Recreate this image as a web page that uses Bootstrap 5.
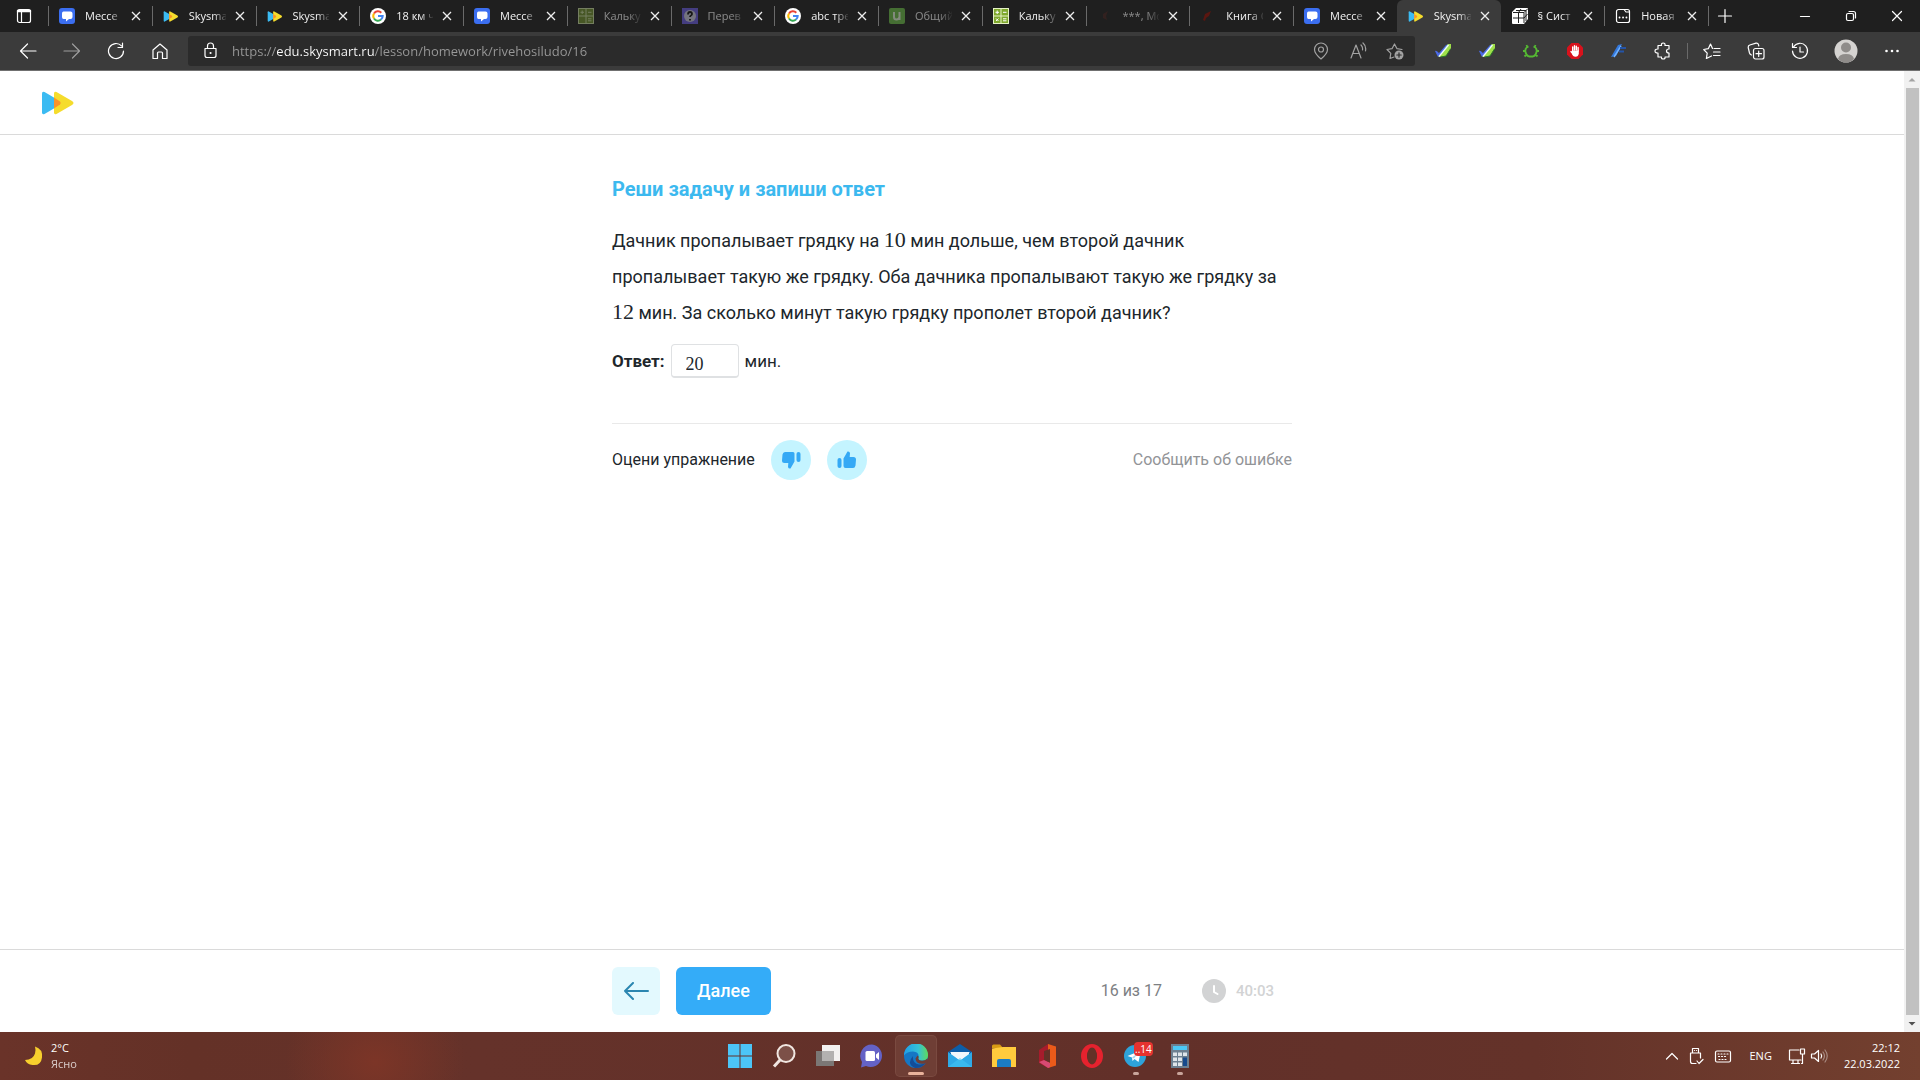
<!DOCTYPE html>
<html lang="ru">
<head>
<meta charset="utf-8">
<meta name="viewport" content="width=device-width, initial-scale=1">
<title>Skysmart</title>
<link href="https://cdn.jsdelivr.net/npm/bootstrap@5.3.0/dist/css/bootstrap.min.css" rel="stylesheet">
<style>
  body { font-family: "Open Sans", "Noto Sans", sans-serif; font-size: 11px; line-height: 16px; color: #fff; background: #fff; }
  svg { display: block; flex: none; }
  .ln { fill: none; stroke: currentColor; stroke-width: 1.2; stroke-linecap: round; stroke-linejoin: round; }
  .bare { border: 0; background: none; color: inherit; padding: 0; display: flex; align-items: center; justify-content: center; flex: none; }

  /* browser window */
  .tabstrip { height: 32px; background: #1f1f1f; }
  .strip-menu { width: 48px; }
  .strip-tabs { min-width: 0; }
  .strip-end { position: relative; flex: none; width: 212px; height: 32px; padding-left: 8px; }
  .strip-end .win { width: 46px; height: 32px; }
  .btab { position: relative; flex: 1 1 0; min-width: 0; padding: 0 8px 0 11px; height: 32px; }
  .btab::before, .strip-end::before { content: ""; position: absolute; left: 0; top: 6px; height: 20px; width: 1px; background: #6a6a6a; }
  .btab a { flex: 1 1 0; min-width: 0; margin-left: 10px; white-space: nowrap; color: #f2f2f2; text-decoration: none;
    -webkit-mask-image: linear-gradient(90deg, #000 65%, transparent 105%); mask-image: linear-gradient(90deg, #000 65%, transparent 105%); }
  .btab.dim > a, .btab.dim > svg { opacity: .5; }
  .btab.on { background: #3b3b3b; border-radius: 6px 6px 0 0; }
  .btab.on::before, .btab.on + .btab::before { display: none; }
  .btab .bare { width: 16px; height: 16px; margin-left: 6px; }
  .toolbar { height: 39px; background: #3b3b3b; border-bottom: 1px solid #707070; padding: 0 6px; }
  .toolbar .tool { width: 44px; height: 32px; }
  .toolbar .tool-wide { width: 48px; height: 32px; }
  .address { flex: 1 1 0; height: 30px; background: #2b2b2b; border-radius: 3px; margin: 0 6px; padding: 0 2px 0 14px; }
  .address input { flex: 1 1 0; min-width: 0; border: 0; outline: 0; padding: 0; margin-left: 12px; font-size: 13px; height: 24px; color: transparent;
    background: linear-gradient(90deg, #999 44px, #fff 44px, #fff 142px, #999 142px); -webkit-background-clip: text; background-clip: text; }
  .addr-tools { color: #a2a2a2; }
  .addr-tools .bare { width: 37px; }
  .tool-rule { width: 1px; height: 16px; background: #6a6a6a; margin: 0 2px; }

  /* lesson page */
  .lesson { font-family: Roboto, "Open Sans", sans-serif; color: #20262b; min-height: 0; }
  .lesson-head { height: 64px; border-bottom: 1px solid #dadada; padding-left: 42px; }
  .measure { width: 100%; max-width: 680px; margin: 0 auto; }
  .task-title { font-size: 20px; line-height: 28px; font-weight: 700; color: #3cb9ef; margin: 0 0 20px; padding-top: 40px; }
  .task-text { font-size: 18px; line-height: 36px; margin: 0; }
  .num { font-family: "Liberation Serif", serif; font-size: 22px; line-height: 24px; }
  .answer { font-size: 17px; line-height: 36px; margin-top: 12px; gap: 6px; }
  .answer input { width: 68px; height: 34px; border: 1px solid #dfe1e3; border-bottom-width: 2px; border-radius: 4px; padding: 6px 14px 0; color: #20262b; font-family: "Liberation Serif", serif; font-size: 18px; }
  .rate { border-top: 1px solid #e9e9e9; margin-top: 44px; padding-top: 16px; font-size: 16px; line-height: 24px; gap: 16px; }
  .thumb { width: 40px; height: 40px; border-radius: 50%; background: #c4f4ff; color: #35a9f5; }
  .report { color: #929497; text-decoration: none; }
  .lesson-foot { height: 83px; border-top: 1px solid #dadada; }
  .go-back { width: 48px; height: 48px; border-radius: 6px; background: #e3f9fe; color: #2b86b0; }
  .go-next { width: 95px; height: 48px; border-radius: 6px; background: #34acf8; color: #fff; font-size: 18px; font-weight: 500; }
  .steps { color: #7d8083; font-size: 16px; }
  .timer { color: #d2d3d4; font-size: 15px; font-weight: 500; margin: 0 18px 0 40px; gap: 10px; }
  .scroller { width: 16px; background: #f1f1f1; }
  .scroller div { width: 13px; background: #c1c1c1; }

  /* desktop taskbar */
  .taskbar { height: 48px; display: grid; grid-template-columns: 1fr auto 1fr; background: radial-gradient(ellipse 90px 80px at 375px 30px, #7c3527, transparent), linear-gradient(90deg, #6a3329, #643127 10%, #65322a 25%, #623029 60%, #643229 80%, #73402f); }
  .app { position: relative; width: 40px; height: 40px; border-radius: 4px; }
  .app.open::after { content: ""; position: absolute; bottom: 1px; left: 17px; width: 6px; height: 3px; border-radius: 2px; background: #c9a59b; }
  .app.front { background: #6f3e35; box-shadow: 0 0 0 1px #7a4a40; }
  .app.front::after { left: 12px; width: 16px; background: #e9b29b; }
  .counter { position: absolute; left: 18px; top: 6px; background: #e5322f; border-radius: 4px; font-size: 10px; line-height: 14px; padding: 0 1px; }
  .weather { padding-left: 25px; }
  .tray { padding-right: 20px; }
</style>
<script src="https://cdn.jsdelivr.net/npm/bootstrap@5.3.0/dist/js/bootstrap.bundle.min.js"></script>
</head>
<body class="d-flex flex-column vh-100 overflow-hidden">

<svg width="0" height="0" class="position-absolute" aria-hidden="true">
  <symbol id="x" viewBox="0 0 10 10"><path d="M1 1l8 8M9 1L1 9" fill="none" stroke="#eee" stroke-width="1.3"/></symbol>
  <symbol id="msg" viewBox="0 0 16 16"><rect width="16" height="16" rx="3" fill="#3b6ef0"/><path d="M4.500 3.500h7q2 0 2 2V9q0 2-2 2H10l-3 2.500V11H4.500q-1.500 0-1.500-2V5.500q0-2 1.500-2z" fill="#fff"/></symbol>
  <symbol id="sky" viewBox="0 0 32 24"><path d="M0 2.500Q0 0 2.500 1L17 9.500Q20 12 17 14.500L2.500 23Q0 24 0 21.500z" fill="#3bbbf2"/><path d="M12 2.500Q12 0 14.500 1L30 10Q33 12 30 14L14.500 23Q12 24 12 21.500z" fill="#f5dc2c"/><path d="M12 6.500l6 4q1.500 1.500 0 3l-6 4z" fill="#f99329"/></symbol>
  <symbol id="goo" viewBox="0 0 16 16"><circle cx="8" cy="8" r="8" fill="#fff"/><g fill="none" stroke-width="2"><path d="M4 5.500A4.700 4.700 0 0 1 11.300 4.700" stroke="#ea4335"/><path d="M4 5.500A4.700 4.700 0 0 0 4 10.500" stroke="#fbbc05"/><path d="M4 10.500A4.700 4.700 0 0 0 11 11.600" stroke="#34a853"/><path d="M11 11.600A4.700 4.700 0 0 0 12.700 8H8" stroke="#4285f4"/></g></symbol>
  <symbol id="calc" viewBox="0 0 16 16"><path fill="#e6f2c5" d="M0 0h16v16H0z"/><path fill="#7fa82d" d="M1 1h6.500v6.500H1zM8.500 1H15v6.500H8.500zM1 8.500h6.500V15H1zM8.500 8.500H15V15H8.500z"/><path d="M2.500 4.300H6M4.200 2.500V6M10 4.300h3.500M3 10.500l2.500 2.500M5.500 10.500L3 13M10 10.800h3.500M10 12.800h3.500" stroke="#fff" fill="none"/></symbol>
  <symbol id="feather" viewBox="0 0 16 16"><path d="M0 8q1-1 4 2l7-8 3-1-5 8-6 5z" fill="#4a6ae6"/><path d="M3 14l8-1 5-8V1l-3 0-6 9z" fill="#9fe04a"/><path d="M4 13.500L13.500 2" stroke="#eef9ff" stroke-width="1.300"/><path d="M6 14l5-1 4.500-7" fill="none" stroke="#2a7a2a"/></symbol>
</svg>

<header>
  <div class="tabstrip d-flex align-items-center">
    <button class="bare strip-menu" aria-label="Меню вкладок"><svg width="16" height="16" class="ln"><rect x="1.500" y="1.500" width="13" height="13" rx="2"/><path d="M2 3h12" stroke-width="2.500"/><path d="M5.500 4v10"/></svg></button>
    <nav class="strip-tabs d-flex flex-grow-1" aria-label="Вкладки">
      <div class="btab d-flex align-items-center"><svg width="16" height="16"><use href="#msg"/></svg><a href="#">Мессе</a><button class="bare" aria-label="Закрыть"><svg width="10" height="10"><use href="#x"/></svg></button></div>
      <div class="btab d-flex align-items-center"><svg width="16" height="11"><use href="#sky"/></svg><a href="#">Skysma</a><button class="bare" aria-label="Закрыть"><svg width="10" height="10"><use href="#x"/></svg></button></div>
      <div class="btab d-flex align-items-center"><svg width="16" height="11"><use href="#sky"/></svg><a href="#">Skysma</a><button class="bare" aria-label="Закрыть"><svg width="10" height="10"><use href="#x"/></svg></button></div>
      <div class="btab d-flex align-items-center"><svg width="16" height="16"><use href="#goo"/></svg><a href="#">18 км ч</a><button class="bare" aria-label="Закрыть"><svg width="10" height="10"><use href="#x"/></svg></button></div>
      <div class="btab d-flex align-items-center"><svg width="16" height="16"><use href="#msg"/></svg><a href="#">Мессе</a><button class="bare" aria-label="Закрыть"><svg width="10" height="10"><use href="#x"/></svg></button></div>
      <div class="btab dim d-flex align-items-center"><svg width="16" height="16"><path fill="#c9dca0" d="M0 0h16v16H0z"/><path fill="#6f8f2c" d="M1 1h6.500v6.500H1zM8.500 1H15v6.500H8.500zM1 8.500h6.500V15H1zM8.500 8.500H15V15H8.500z"/><path d="M2.500 4.300H6M4.200 2.500V6M10 4.300h3.500M10 10.800h3.500M10 12.800h3.500" stroke="#c9dca0" fill="none"/></svg><a href="#">Кальку</a><button class="bare" aria-label="Закрыть"><svg width="10" height="10"><use href="#x"/></svg></button></div>
      <div class="btab dim d-flex align-items-center"><svg width="16" height="16"><path fill="#6a5ce0" d="M0 0h16v16H0z"/><circle cx="8" cy="8" r="6" fill="#c9c9dc"/><path d="M6 6.500q0-2.500 2-2.500t2 2q0 1-1 1.500t-1 1.500M8 11v1.500" fill="none" stroke="#111" stroke-width="1.800"/></svg><a href="#">Перев</a><button class="bare" aria-label="Закрыть"><svg width="10" height="10"><use href="#x"/></svg></button></div>
      <div class="btab d-flex align-items-center"><svg width="16" height="16"><use href="#goo"/></svg><a href="#">abc тре</a><button class="bare" aria-label="Закрыть"><svg width="10" height="10"><use href="#x"/></svg></button></div>
      <div class="btab dim d-flex align-items-center"><svg width="16" height="16"><rect width="16" height="16" rx="2" fill="#6cbc48"/><path d="M5 4v5q0 2.500 2.500 2.500T10.500 9V4M10.500 8v4" fill="none" stroke="#e5f5dc" stroke-width="2"/></svg><a href="#">Общий</a><button class="bare" aria-label="Закрыть"><svg width="10" height="10"><use href="#x"/></svg></button></div>
      <div class="btab d-flex align-items-center"><svg width="16" height="16"><use href="#calc"/></svg><a href="#">Кальку</a><button class="bare" aria-label="Закрыть"><svg width="10" height="10"><use href="#x"/></svg></button></div>
      <div class="btab dim d-flex align-items-center"><svg width="16" height="16"><path d="M6 6l5-3-2 5 1 4-4-2z" fill="#46231f"/></svg><a href="#">***, Мс</a><button class="bare" aria-label="Закрыть"><svg width="10" height="10"><use href="#x"/></svg></button></div>
      <div class="btab d-flex align-items-center"><svg width="16" height="16"><path d="M3 12l2-6 6-3-2 5-3 2-1 3z" fill="#5a1610"/></svg><a href="#">Книга С</a><button class="bare" aria-label="Закрыть"><svg width="10" height="10"><use href="#x"/></svg></button></div>
      <div class="btab d-flex align-items-center"><svg width="16" height="16"><use href="#msg"/></svg><a href="#">Мессе</a><button class="bare" aria-label="Закрыть"><svg width="10" height="10"><use href="#x"/></svg></button></div>
      <div class="btab on d-flex align-items-center"><svg width="16" height="11"><use href="#sky"/></svg><a href="#" aria-current="page">Skysma</a><button class="bare" aria-label="Закрыть"><svg width="10" height="10"><use href="#x"/></svg></button></div>
      <div class="btab d-flex align-items-center"><svg width="16" height="16"><path d="M4 0h11q1 0 1 1v10l-4 5H1q-1 0-1-1V4z" fill="#fff"/><path d="M1 4.500h11V15M12 4.500L15.500 1M6.500 4.500V15M1 10h11l3.500-4M4 2.500h10V13M6.500 4.500L9 1" fill="none" stroke="#222"/></svg><a href="#">§ Сист</a><button class="bare" aria-label="Закрыть"><svg width="10" height="10"><use href="#x"/></svg></button></div>
      <div class="btab d-flex align-items-center"><svg width="16" height="16" class="ln"><path d="M3.500 1.500H9L11 4h3.500v8.500a2 2 0 0 1-2 2h-9a2 2 0 0 1-2-2v-9a2 2 0 0 1 2-2zM9 1.500h3.500a2 2 0 0 1 2 2V5"/><path d="M4.500 9.500h.1M8 9.500h.1M11.400 9.500h.1" stroke-width="1.800"/></svg><a href="#">Новая</a><button class="bare" aria-label="Закрыть"><svg width="10" height="10"><use href="#x"/></svg></button></div>
    </nav>
    <div class="strip-end d-flex align-items-center">
      <button class="bare" aria-label="Новая вкладка"><svg width="18" height="18" class="ln"><path d="M9 2.500v13M2.500 9h13"/></svg></button>
      <div class="ms-auto d-flex">
        <button class="bare win" aria-label="Свернуть"><svg width="12" height="12" class="ln"><path d="M1.500 6.500h9"/></svg></button>
        <button class="bare win" aria-label="Окно"><svg width="12" height="12" class="ln"><rect x="1.500" y="3.500" width="7" height="7" rx="1.500"/><path d="M4 1.500h4.500a2 2 0 0 1 2 2V8"/></svg></button>
        <button class="bare win" aria-label="Закрыть окно"><svg width="12" height="12" class="ln"><path d="M1.500 1.500l9 9M10.500 1.500l-9 9"/></svg></button>
      </div>
    </div>
  </div>

  <div class="toolbar d-flex align-items-center">
    <button class="bare tool" aria-label="Назад"><svg width="18" height="18" class="ln"><path d="M17 9H2M8.500 2L1.500 9l7 7"/></svg></button>
    <button class="bare tool opacity-50" aria-label="Вперёд"><svg width="18" height="18" class="ln"><path d="M1 9h15M9.500 2l7 7-7 7"/></svg></button>
    <button class="bare tool" aria-label="Обновить"><svg width="18" height="18" class="ln"><path d="M16.500 9A7.500 7.500 0 1 1 14.500 3.900M15.500 1v4.500H11"/></svg></button>
    <button class="bare tool" aria-label="Домой"><svg width="18" height="18" class="ln"><path d="M2 8l7-6 7 6v8.500h-4.500V11q0-1-1-1h-3q-1 0-1 1v5.500H2z"/></svg></button>
    <div class="address d-flex align-items-center">
      <svg width="18" height="18" class="ln"><path d="M3 6.500h11v7q0 2-2 2H5q-2 0-2-2zM5.500 6.500V4a3 3 0 0 1 6 0v2.500"/><path d="M8.500 11h.1" stroke-width="2"/></svg>
      <input type="text" aria-label="Адрес" spellcheck="false" value="https://edu.skysmart.ru/lesson/homework/rivehosiludo/16">
      <div class="addr-tools d-flex">
        <button class="bare" aria-label="Местоположение"><svg width="18" height="18" class="ln"><path d="M9 17Q2.500 11.500 2.500 7.500a6.500 6.500 0 0 1 13 0Q15.500 11.500 9 17z"/><circle cx="9" cy="7.500" r="2.500"/></svg></button>
        <button class="bare" aria-label="Прочесть вслух"><svg width="18" height="18" class="ln"><path d="M2 16L7 3l5 13M4 11.500h6M12 3q2 2 1.500 5M14 1q3.500 3 2.500 8"/></svg></button>
        <button class="bare" aria-label="В избранное"><svg width="18" height="18" class="ln"><path d="M8 15l-4 1.500.8-5.200L1 7.500l5-.8L8.500 2 11 6.700l5 .8"/><circle cx="13" cy="13" r="4.500" fill="#a2a2a2" stroke="none"/><path d="M13 10.800v4.400M10.800 13h4.400" stroke="#2b2b2b"/></svg></button>
      </div>
    </div>
    <button class="bare tool" aria-label="Расширение"><svg width="16" height="16"><use href="#feather"/></svg></button>
    <button class="bare tool" aria-label="Расширение"><svg width="16" height="16"><use href="#feather"/></svg></button>
    <button class="bare tool" aria-label="Расширение"><svg width="16" height="16" fill="none" stroke="#55b833" stroke-width="1.800"><path d="M5.500 3.500Q1.500 5 2.500 9q.5 3.500 3.500 4.500h4q3-1 3.500-4.500 1-4-3-5.500M4.500 4.500L3.500 2M11.500 4.500l1-2.500M2.500 8H0M13.500 8H16M3.500 11.500L1.500 13.500M12.500 11.500l2 2"/></svg></button>
    <button class="bare tool" aria-label="Расширение"><svg width="18" height="18"><path d="M5.500 1h7L17 5.500v7L12.500 17h-7L1 12.500v-7z" fill="#d8121c"/><path d="M6.700 9V5M8.500 8V3.800M10.300 8V4.200M12.100 9V5.500M5 9.500l2 2.500" stroke="#fff" stroke-width="1.400" stroke-linecap="round"/><path d="M6 8.500h6.800v3q-.5 3.300-3.300 3.300T6 11.500z" fill="#fff"/></svg></button>
    <button class="bare tool" aria-label="Расширение"><svg width="18" height="18"><path d="M1 15L8 3l4-1-6 12z" fill="#3478dc"/><path d="M4 15L11 4" stroke="#6fb2ff" stroke-width="1.500"/><path d="M10 6h6M9 9.500h5" stroke="#2454a8" stroke-width="2"/></svg></button>
    <button class="bare tool" aria-label="Расширения"><svg width="18" height="18" class="ln"><path d="M4 3.500h3.500q-.5-2.500 1.700-2.500t1.800 2.500h4V7q-2.500 0-2.500 2T15 11v4h-4q.4 2-1.800 2T7.500 15H4v-4q-3 .2-3-2t3-2z"/></svg></button>
    <div class="tool-rule"></div>
    <button class="bare tool" aria-label="Избранное"><svg width="18" height="18" class="ln"><path d="M9.500 6.500L7.500 2 5.300 6.700l-4.600.8 3.500 3.700-.8 5.300L8.500 14M11 6.500h6M10.500 10h6.500M10.500 13.500h6.500"/></svg></button>
    <button class="bare tool" aria-label="Коллекции"><svg width="18" height="18" class="ln"><rect x="6.500" y="6.500" width="10.500" height="10.500" rx="2"/><path d="M11.700 9v5.500M9 11.700h5.500M4.500 13q-1.500-.5-2-2L1.200 5.500Q1 3.500 2.800 3L9 1.200q2-.3 2.500 1.500l.3 1.300"/></svg></button>
    <button class="bare tool" aria-label="Журнал"><svg width="18" height="18" class="ln"><path d="M2.500 5A7.500 7.500 0 1 1 1.500 9M1.500 1.500V5.500h4M9 5v5h3.500"/></svg></button>
    <button class="bare tool-wide" aria-label="Профиль"><svg width="24" height="24"><circle cx="12" cy="12" r="11.500" fill="#d5d3d1"/><circle cx="12" cy="8.500" r="5" fill="#8f8c8a"/><path d="M4 20q1-5 8-5t8 5q-3.500 3.500-8 3.500T4 20z" fill="#8f8c8a"/></svg></button>
    <button class="bare tool" aria-label="Параметры"><svg width="16" height="4" fill="#fff"><circle cx="2.500" cy="2" r="1.300"/><circle cx="8" cy="2" r="1.300"/><circle cx="13.500" cy="2" r="1.300"/></svg></button>
  </div>
</header>

<div class="lesson d-flex flex-grow-1">
  <div class="d-flex flex-column flex-grow-1">
    <div class="lesson-head d-flex align-items-center"><a href="#" aria-label="Skysmart"><svg width="32" height="24"><use href="#sky"/></svg></a></div>
    <main class="flex-grow-1">
      <div class="measure">
        <h1 class="task-title">Реши задачу и запиши ответ</h1>
        <p class="task-text">Дачник пропалывает грядку на <span class="num">10</span> мин дольше, чем второй дачник<br>пропалывает такую же грядку. Оба дачника пропалывают такую же грядку за<br><span class="num">12</span> мин. За сколько минут такую грядку прополет второй дачник?</p>
        <div class="answer d-flex align-items-center"><label for="ans" class="fw-bold">Ответ:</label><input id="ans" type="text" value="20"><span>мин.</span></div>
        <div class="rate d-flex align-items-center">
          <span>Оцени упражнение</span>
          <button class="bare thumb" aria-label="Не нравится"><svg width="20" height="20" fill="currentColor"><path d="M4 2h8q1.500 0 1.500 1.500v8L9.500 18.500q-2 .5-2.500-1.500l.3-4H3.500Q1 13 1 10.500L1.500 4.500Q2 2 4 2z"/><rect x="15.500" y="2" width="4" height="10" rx="2"/></svg></button>
          <button class="bare thumb" aria-label="Нравится"><svg width="20" height="20" fill="currentColor"><path d="M16 18H8.500Q6.500 18 6.500 16V8.500L10.500 1.500q2-.5 2.500 1.500l-.3 4h3.800Q19 7 19 9.500l-.5 6Q18 18 16 18z"/><rect x=".5" y="8" width="4" height="10" rx="2"/></svg></button>
          <a href="#" class="report ms-auto">Сообщить об ошибке</a>
        </div>
      </div>
    </main>
    <footer class="lesson-foot d-flex align-items-center">
      <div class="measure d-flex align-items-center">
        <button class="bare go-back me-3" aria-label="Назад"><svg width="26" height="18" fill="none" stroke="currentColor" stroke-width="2" stroke-linecap="round" stroke-linejoin="round"><path d="M25 9H2M10 1L2 9l8 8"/></svg></button>
        <button class="bare go-next">Далее</button>
        <span class="steps ms-auto">16 из 17</span>
        <span class="timer d-flex align-items-center"><svg width="24" height="24"><circle cx="12" cy="12" r="12" fill="currentColor"/><path d="M12 7v6l3.500 2" fill="none" stroke="#fff" stroke-width="2" stroke-linecap="round"/></svg>40:03</span>
      </div>
    </footer>
  </div>
  <div class="scroller d-flex flex-column align-items-center" aria-hidden="true">
    <svg width="16" height="17"><path d="M4.500 10.500L8 7l3.500 3.500z" fill="#a3a3a3"/></svg>
    <div class="flex-grow-1"></div>
    <svg width="16" height="17"><path d="M4.500 7L8 10.500 11.500 7z" fill="#505050"/></svg>
  </div>
</div>

<div class="taskbar align-items-center">
  <div class="weather d-flex align-items-center">
    <svg width="18" height="20"><path d="M10 .5Q18 3 17 11.500T7.500 19Q2 18.500 0 14q8 0 10-6.500Q11 4 10 .5z" fill="#f7cf2d"/></svg>
    <div class="ms-2"><div>2°C</div><div class="opacity-75">Ясно</div></div>
  </div>
  <div class="d-flex gap-1">
    <button class="bare app" aria-label="Пуск"><svg width="24" height="24" fill="#4cc5f7"><path d="M0 0h11.500v11.500H0zM12.500 0H24v11.500H12.500zM0 12.500h11.500V24H0zM12.500 12.500H24V24H12.500z"/></svg></button>
    <button class="bare app" aria-label="Поиск"><svg width="24" height="24" fill="#7c5048" stroke="#f1e6e1" stroke-width="2"><circle cx="14" cy="9.500" r="8.500"/><path d="M8 16l-6 6.500" stroke-width="3"/></svg></button>
    <button class="bare app" aria-label="Представление задач"><svg width="24" height="24"><path d="M6 1h18v16H6z" fill="#f3f1f0"/><path d="M0 7h18v15H0z" fill="#7b7775"/><path d="M6 7h12v10H6z" fill="#b3b1b0"/></svg></button>
    <button class="bare app" aria-label="Чат"><svg width="24" height="24"><path d="M12 .5A11.300 11.300 0 1 1 6 22L1 23.500 2 18A11.500 11.500 0 0 1 12 .5z" fill="#6462c6"/><rect x="5.500" y="7" width="9.500" height="10" rx="1.500" fill="#fff"/><path d="M16 10.500l3-2.500v8l-3-2.500z" fill="#fff"/></svg></button>
    <button class="bare app open front" aria-label="Edge"><svg width="24" height="24"><defs><linearGradient id="eg" x1="0" x2="1"><stop stop-color="#1f9ee8"/><stop offset=".6" stop-color="#35c1d5"/><stop offset="1" stop-color="#5fdc5b"/></linearGradient></defs><circle cx="12" cy="12" r="12" fill="#1577c4"/><path d="M0 11.500A12 12 0 0 1 24 11q.2 5.500-6 5.500-4.500 0-3.500-3Q15.500 8 9 7.500 3 7.500 0 11.500z" fill="url(#eg)"/><path d="M9 12q-1 7 6 8.500 4 .5 7.500-2.500Q18 24.500 11 24 2 20 9 12z" fill="#134d98"/><path d="M13.500 11.500q2 1 .8 3 .5 2.500 4.500 2.200 3-.3 4.500-2.200L24 19l-3 .5q-9 1.500-9.500-5z" fill="#6f3e35"/></svg></button>
    <button class="bare app" aria-label="Почта"><svg width="24" height="24"><path d="M0 8L12 0l12 8v5H0z" fill="#0d5ea8"/><path d="M3 8h18v8H3z" fill="#f2f8fc"/><path d="M0 8l12 8.500L24 8v15H0z" fill="#2fa9e6"/><path d="M2 8h20l-10 8.500z" fill="#f2f8fc"/><path d="M0 23L12 14l12 9z" fill="#42c5f3" opacity=".6"/></svg></button>
    <button class="bare app" aria-label="Проводник"><svg width="24" height="24"><path d="M0 2q0-1.500 1.500-1.500H8L11 4H0z" fill="#d89b14"/><path d="M0 4.500L11 3h13v20H0z" fill="#ffcb3d"/><path d="M5 23v-6q0-2 2-2h10q2 0 2 2v6z" fill="#1b7cc4"/></svg></button>
    <button class="bare app" aria-label="Office"><svg width="24" height="24"><path d="M3 6l9-6v24l-9-5z" fill="#a61c2c"/><path d="M12 0l8 2.500v19L12 24z" fill="#ea5a1a"/><path d="M8 7l6-2v14l-6-3z" fill="#643127"/><path d="M3 18l5-2 6 3v4l-2 1z" fill="#d74a73"/></svg></button>
    <button class="bare app" aria-label="Opera"><svg width="24" height="24"><ellipse cx="12" cy="12" rx="8" ry="9" fill="none" stroke="#e5222e" stroke-width="6"/><ellipse cx="12" cy="12" rx="5" ry="8.500" fill="#643127"/></svg></button>
    <button class="bare app open" aria-label="Telegram"><svg width="24" height="24"><circle cx="11" cy="12" r="11" fill="#2ea3da"/><path d="M3.500 12L17 6.500 14.500 18l-4-3-2 2-.5-3.500z" fill="#fff"/><path d="M8 13.500l6-4.500-4 5.500z" fill="#a9d4ea"/></svg><span class="counter">..14</span></button>
    <button class="bare app open" aria-label="Калькулятор"><svg width="24" height="24"><path d="M3 0h18v24H3z" fill="#6c7f90"/><path d="M5 2h14v4H5z" fill="#4cc8f5"/><path d="M5 8.500h4v3.500H5zM10 8.500h4v3.500h-4zM15 8.500h4v3.500h-4zM5 13.500h4V17H5zM10 13.500h4V17h-4zM5 18.500h4V22H5zM10 18.500h4V22h-4z" fill="#dfe5ea"/><path d="M15 13.500h4V22h-4z" fill="#174a8c"/></svg></button>
  </div>
  <div class="tray d-flex align-items-center justify-content-end">
    <svg width="14" height="14" class="ln me-2"><path d="M1.500 10L7 4.500l5.500 5.500"/></svg>
    <svg width="18" height="18" class="ln me-2"><path d="M5.500 6V1.500h6V6M3.500 6h10v5M9 16.500H5.500q-2 0-2-2V6M10 14l2 2.500 4-4M7.500 3.500h.1M9.500 3.500h.1"/></svg>
    <svg width="20" height="18" class="ln me-3"><rect x="2.500" y="4" width="15" height="11" rx="1.500"/><path d="M5 7h10M5.500 9.500h9M6 12.500h8" stroke-dasharray="1 2"/></svg>
    <span class="me-3">ENG</span>
    <svg width="18" height="18" class="ln me-1"><path d="M11 3H1.500v10H13M5 13v3.500M10 13v3.500M3.500 16.500h8M12.500 2h4v5h-4zM14.500 7v9.500h-1"/></svg>
    <svg width="18" height="18" class="ln me-3"><path d="M1.500 7h3L8.500 3.500v11L4.500 11h-3zM11 7q1.500 2 0 4"/><path d="M13 5q3 4 0 8M15 3q4.500 6 0 12" opacity=".4"/></svg>
    <div class="text-end"><div>22:12</div><div>22.03.2022</div></div>
  </div>
</div>
</body>
</html>
